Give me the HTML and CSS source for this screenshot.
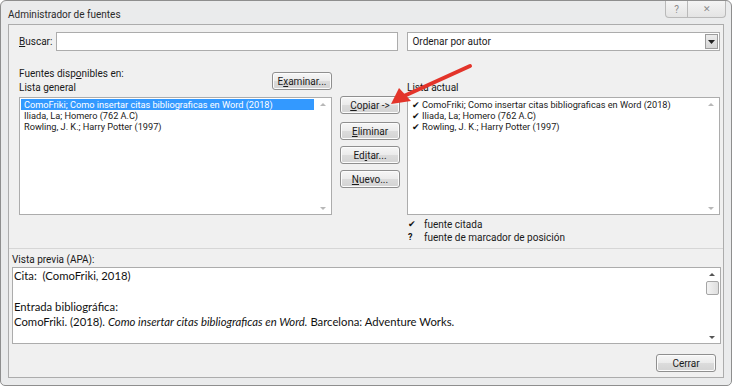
FILE: index.html
```html
<!DOCTYPE html>
<html lang="es">
<head>
<meta charset="utf-8">
<title>Administrador de fuentes</title>
<link rel="stylesheet" href="styles.css">
</head>
<body>
<div class="window">
  <div class="titlebar">
    <span class="title">Administrador de fuentes</span>
    <div class="caption-btns">
      <span class="cap help">?</span>
      <span class="cap close">&#x2715;</span>
    </div>
  </div>
  <div class="client">
    <div class="search-row">
      <label class="lbl"><u>B</u>uscar:</label>
      <div class="textbox"></div>
      <div class="combo"><span>Ordenar por autor</span><span class="combo-btn"><svg width="7" height="4" viewBox="0 0 7 4"><path d="M0 0h7L3.5 4z" fill="#222"/></svg></span></div>
    </div>
    <div class="main">
      <div class="col">
        <div class="col-head left-head">
          <div class="head-text">
            <div>Fuentes disp<u>o</u>nibles en:</div>
            <div>Lista general</div>
          </div>
          <button class="btn exam">E<u>x</u>aminar...</button>
        </div>
        <div class="listbox">
          <div class="items">
            <div class="item sel">ComoFriki; Como insertar citas bibliograficas en Word (2018)</div>
            <div class="item">Iliada, La; Homero (762 A.C)</div>
            <div class="item">Rowling, J. K.; Harry Potter (1997)</div>
          </div>
          <div class="vscroll"><span class="arr up"></span><span class="arr down"></span></div>
        </div>
      </div>
      <div class="mid">
        <button class="btn first"><u>C</u>opiar -&gt;</button>
        <button class="btn"><u>E</u>liminar</button>
        <button class="btn">Ed<u>i</u>tar...</button>
        <button class="btn"><u>N</u>uevo...</button>
      </div>
      <div class="col">
        <div class="col-head right-head">
          <div class="head-text"><div>Lista actual</div></div>
        </div>
        <div class="listbox">
          <div class="items">
            <div class="item"><span class="chk">&#x2714;</span>ComoFriki; Como insertar citas bibliograficas en Word (2018)</div>
            <div class="item"><span class="chk">&#x2714;</span>Iliada, La; Homero (762 A.C)</div>
            <div class="item"><span class="chk">&#x2714;</span>Rowling, J. K.; Harry Potter (1997)</div>
          </div>
          <div class="vscroll"><span class="arr up"></span><span class="arr down"></span></div>
        </div>
        <div class="legend">
          <div class="leg-row"><span class="sym">&#x2714;</span>fuente citada</div>
          <div class="leg-row"><span class="sym q">?</span>fuente de marcador de posición</div>
        </div>
      </div>
    </div>
    <div class="sep"></div>
    <div class="preview-label">Vista previa (APA):</div>
    <div class="preview">
      <div class="preview-text">
        <p>Cita:&nbsp; (ComoFriki, 2018)</p>
        <p>&nbsp;</p>
        <p>Entrada bibliográfica:</p>
        <p>ComoFriki. (2018). <i>Como insertar citas bibliograficas en Word.</i> Barcelona: Adventure Works.</p>
      </div>
      <div class="pscroll">
        <span class="arr up"></span>
        <span class="thumb"></span>
        <span class="track"></span>
        <span class="arr down"></span>
      </div>
    </div>
    <div class="footer"><button class="btn close-btn">Cerrar</button></div>
  </div>
  <svg class="red-arrow" width="732" height="386" viewBox="0 0 732 386">
    <line x1="470" y1="66" x2="404" y2="96" stroke="#e3342a" stroke-width="4" stroke-linecap="round"/>
    <polygon points="391,104 399,88 411,101" fill="#e3342a"/>
  </svg>
</div>
</body>
</html>
```
FILE: styles.css
```css
* { box-sizing: border-box; }
html, body { margin: 0; padding: 0; background: #ffffff; }
body { font-family: Roboto, "Open Sans", sans-serif; font-size: 10px; color: #1a1a1a; }

.window {
  position: relative;
  width: 732px;
  height: 386px;
  border: 1px solid #8e8e8e;
  border-radius: 6px 6px 5px 5px;
  background: #eaebec;
  padding: 0 7px 7px 7px;
  display: flex;
  flex-direction: column;
}

.titlebar {
  height: 23px;
  display: flex;
  align-items: center;
  justify-content: space-between;
  position: relative;
}
.title { font-size: 10px; color: #2a2a2a; margin-top: 3px; }
.caption-btns { display: flex; align-self: flex-start; margin-right: -2px; }
.cap {
  height: 17px;
  display: flex;
  align-items: center;
  justify-content: center;
  border: 1px solid #b9b9b9;
  border-top: none;
  background: linear-gradient(#f4f4f4, #e4e4e4);
  color: #8a8a8a;
  font-size: 10px;
}
.help { width: 23px; border-radius: 0 0 0 4px; }
.close { width: 38px; border-left: none; border-radius: 0 0 4px 0; font-size: 9px; }

.client {
  flex: 1;
  border: 1px solid #acacac;
  background: #f0f0f0;
  display: flex;
  flex-direction: column;
  padding: 7px 3px 0 3px;
}

.search-row {
  display: flex;
  align-items: center;
  height: 19px;
  padding-left: 7px;
}
.lbl { width: 37px; }
.textbox {
  width: 343px;
  height: 19px;
  border: 1px solid #acacac;
  background: #fff;
}
.combo {
  margin-left: 9px;
  width: 313px;
  height: 19px;
  border: 1px solid #acacac;
  background: #fff;
  display: flex;
  align-items: center;
  justify-content: space-between;
  padding-left: 4px;
}
.combo-btn {
  width: 13px;
  height: 15px;
  margin-right: 1px;
  border: 1px solid #9c9c9c;
  background: linear-gradient(#ececec, #d6d6d6);
  display: flex;
  align-items: center;
  justify-content: center;
}

.main {
  display: flex;
  padding-left: 7px;
  margin-top: 16px;
}
.col { width: 313px; display: flex; flex-direction: column; }
.col-head { height: 30px; display: flex; justify-content: space-between; }
.left-head { align-items: flex-start; }
.right-head { align-items: flex-end; }
.head-text { line-height: 14px; }
.right-head .head-text { padding-bottom: 2px; }

.btn {
  font-family: inherit;
  font-size: 10px;
  color: #1a1a1a;
  height: 18px;
  padding: 0;
  border: 1px solid #8f8f8f;
  border-radius: 3px;
  background: linear-gradient(#f6f6f6 0%, #ebebeb 50%, #dcdcdc 51%, #d3d3d3 100%);
  box-shadow: inset 0 0 0 1px #fcfcfc;
  cursor: default;
}
.exam { width: 60px; margin-top: 5px; }

.listbox {
  height: 118px;
  border: 1px solid #acacac;
  background: #fff;
  display: flex;
}
.items { flex: 1; padding: 1px 1px 0 1px; }
.item { height: 11px; line-height: 11px; padding-left: 3px; font-size: 9.2px; white-space: nowrap; }
.item.sel { background: #3399ff; color: #fff; }
.chk { font-size: 9px; margin-right: 2px; color: #111; }
.vscroll {
  width: 16px;
  display: flex;
  flex-direction: column;
  justify-content: space-between;
  align-items: center;
  padding: 5px 0 4px;
}
.arr { width: 0; height: 0; border-left: 3px solid transparent; border-right: 3px solid transparent; }
.arr.up { border-bottom: 3px solid #b8b8b8; }
.arr.down { border-top: 3px solid #b8b8b8; }

.mid {
  width: 75px;
  display: flex;
  flex-direction: column;
  gap: 6px;
  padding: 29px 7px 0 8px;
}
.mid .btn { width: 60px; }
.mid .btn.first { margin-bottom: 2px; }

.legend { padding-top: 3px; padding-left: 1px; }
.leg-row { height: 13px; line-height: 13px; display: flex; }
.sym { width: 16px; font-size: 9px; text-align: left; color: #111; }
.sym.q { font-weight: bold; font-size: 9px; }

.sep { height: 1px; background: #d6d6d6; margin: 4px -3px 0; }

.preview-label { margin-top: 4px; height: 14px; line-height: 14px; }
.preview {
  margin-top: 0;
  height: 77px;
  width: 709px;
  border: 1px solid #acacac;
  background: #fff;
  display: flex;
}
.preview-text {
  flex: 1;
  padding: 0 1px;
  font-family: "Lato", "Open Sans", sans-serif;
  font-size: 11.3px;
  line-height: 15.3px;
  color: #111;
}
.preview-text p { margin: 0; }
.pscroll {
  width: 16px;
  display: flex;
  flex-direction: column;
  align-items: center;
  padding: 5px 0 4px;
}
.thumb {
  margin-top: 5px;
  width: 13px;
  height: 14px;
  border: 1px solid #a5a5a5;
  border-radius: 2px;
  background: linear-gradient(90deg, #f3f3f3, #dedede);
}
.track { flex: 1; }
.pscroll .arr.up, .pscroll .arr.down { border-bottom-color: #555; border-top-color: #555; }

.footer { display: flex; justify-content: flex-end; padding: 10px 4px 0 0; }
.close-btn { width: 60px; }

.red-arrow { position: absolute; left: -1px; top: -1px; pointer-events: none; }
```
